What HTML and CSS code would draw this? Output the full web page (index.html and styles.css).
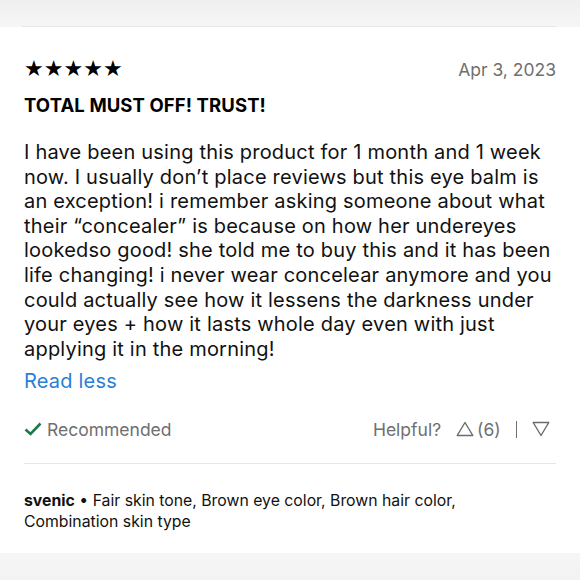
FILE: index.html
```html
<!DOCTYPE html>
<html>
<head>
<meta charset="utf-8">
<link rel="stylesheet" href="styles.css">
</head>
<body>
<div class="page">
  <div class="topband"><div class="topline"></div></div>
  <div class="review">
    <div class="head">
      <div class="stars">★★★★★</div>
      <div class="date">Apr 3, 2023</div>
    </div>
    <h2 class="title">TOTAL MUST OFF! TRUST!</h2>
    <p class="body">I have been using this product for 1 month and 1 week<br>now. I usually don’t place reviews but this eye balm is<br>an exception! i remember asking someone about what<br>their “concealer” is because on how her undereyes<br>lookedso good! she told me to buy this and it has been<br>life changing! i never wear concelear anymore and you<br>could actually see how it lessens the darkness under<br>your eyes + how it lasts whole day even with just<br>applying it in the morning!</p>
    <a class="readless">Read less</a>
    <div class="actions">
      <div class="rec">
        <svg class="check" width="18" height="14" viewBox="0 0 18 14"><path d="M1.5 7.5 L6.5 12 L16.5 1.5" fill="none" stroke="#1c7a4a" stroke-width="2.6"/></svg>
        <span>Recommended</span>
      </div>
      <div class="helpful">
        <span class="hlabel">Helpful?</span>
        <svg class="tri" width="18" height="16" viewBox="0 0 18 16"><path d="M9 1.5 L16.8 14.5 L1.2 14.5 Z" fill="none" stroke="#6b6b6b" stroke-width="1.4" stroke-linejoin="round"/></svg>
        <span class="count">(6)</span>
        <span class="sep"></span>
        <svg class="tri" width="18" height="16" viewBox="0 0 18 16"><path d="M9 14.5 L16.8 1.5 L1.2 1.5 Z" fill="none" stroke="#6b6b6b" stroke-width="1.4" stroke-linejoin="round"/></svg>
      </div>
    </div>
    <div class="divider"></div>
    <p class="author"><b>svenic</b> • Fair skin tone, Brown eye color, Brown hair color,<br>Combination skin type</p>
  </div>
  <div class="bottomband"></div>
</div>
</body>
</html>
```
FILE: styles.css
```css
html, body {
  margin: 0;
  padding: 0;
  background: #ffffff;
}
body {
  font-family: Inter, "Liberation Sans", Arial, sans-serif;
  color: #111;
  width: 580px;
  height: 580px;
  overflow: hidden;
}
.page {
  display: flex;
  flex-direction: column;
  height: 580px;
}
.topband {
  height: 27px;
  background: linear-gradient(#efefef, #f6f6f6);
  display: flex;
  align-items: flex-end;
  padding: 0 24px 0 22px;
}
.topline {
  flex: 1;
  height: 1px;
  background: #e6e6e6;
}
.review {
  padding: 0 24px 0 24px;
  flex: 1;
  display: flex;
  flex-direction: column;
}
.head {
  display: flex;
  justify-content: space-between;
  align-items: center;
  margin-top: 29px;
  height: 26px;
}
.stars {
  font-family: "DejaVu Sans", sans-serif;
  font-size: 22px;
  color: #000;
  line-height: 26px;
}
.date {
  font-size: 17.5px;
  color: #6f6f6f;
}
.title {
  margin: 11px 0 0 0;
  font-size: 18.5px;
  font-weight: 700;
  letter-spacing: 0.1px;
  color: #000;
  line-height: 24px;
}
.body {
  margin: 23px 0 0 0;
  font-size: 20px;
  letter-spacing: 0.2px;
  line-height: 24.6px;
  color: #111;
}
.readless {
  display: block;
  margin-top: 8px;
  font-size: 20px;
  letter-spacing: 0.2px;
  line-height: 24px;
  color: #2a7fd4;
}
.actions {
  margin-top: 24px;
  display: flex;
  justify-content: space-between;
  align-items: center;
  height: 24px;
  color: #6f6f6f;
  font-size: 17.5px;
}
.rec {
  display: flex;
  align-items: center;
  gap: 5px;
}
.helpful {
  display: flex;
  align-items: center;
  margin-right: 6px;
}
.hlabel { margin-right: 15px; }
.count { margin-left: 3px; }
.sep {
  width: 1.3px;
  height: 17px;
  background: #6f6f6f;
  margin: 0 15px 0 15px;
}
.divider {
  margin-top: 22px;
  height: 1px;
  background: #e6e6e6;
}
.author {
  margin: 26px 0 0 0;
  font-size: 15.8px;
  line-height: 21px;
  color: #111;
}
.author b { font-weight: 700; }
.bottomband {
  height: 27px;
  background: linear-gradient(#f6f6f6, #f2f2f2);
}
```
